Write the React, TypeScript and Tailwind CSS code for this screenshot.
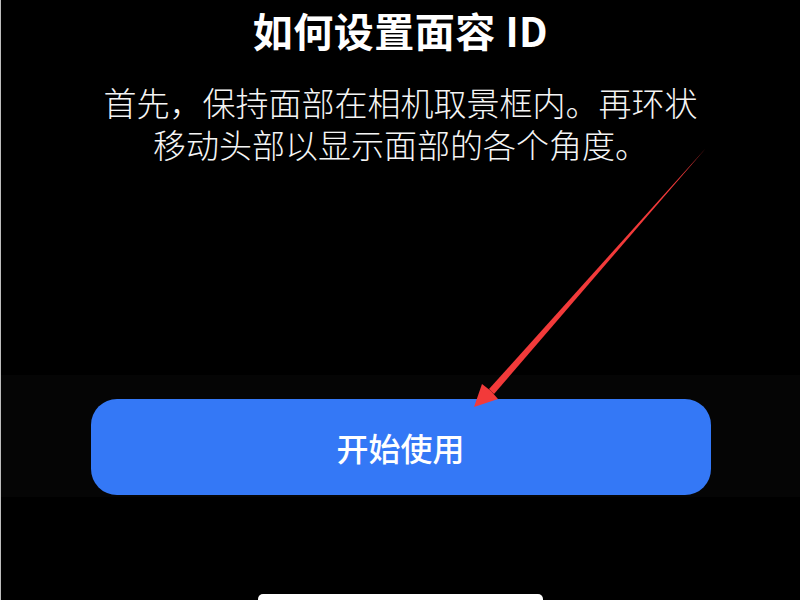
const cjk = { fontFamily: '"Noto Sans CJK SC", "Noto Sans", sans-serif' };

function Arrow() {
  // red annotation arrow pointing at the button
  return (
    <svg
      className="absolute left-0 top-0 pointer-events-none"
      width="800"
      height="600"
      viewBox="0 0 800 600"
    >
      <polygon points="705,148 493,394 488,389" fill="#f23a3a" />
      <polygon points="473,407 481,384 490,391 497,399" fill="#f23a3a" />
    </svg>
  );
}

export default function App() {
  return (
    <div
      className="relative w-[800px] h-[600px] bg-black overflow-hidden flex flex-col items-center text-white border-l border-[#bdbdbd]"
      style={cjk}
    >
      <h1 className="mt-[6px] text-[40px] leading-[48px] font-bold tracking-[0.5px]">
        如何设置面容 ID
      </h1>
      <p className="mt-[27px] text-[33px] leading-[42px] font-light text-center text-[#f5f5f5]">
        首先，保持面部在相机取景框内。再环状
        <br />
        移动头部以显示面部的各个角度。
      </p>

      <div className="mt-[210px] w-full bg-[#050505] pt-[24px] pb-[2px] flex justify-center">
        <button className="w-[620px] h-[96px] rounded-[26px] bg-[#3478f6] text-white text-[32px] font-medium">
          开始使用
        </button>
      </div>

      <div className="mt-auto w-[285px] h-[6px] bg-white rounded-t-[5px]" />

      <Arrow />
    </div>
  );
}
